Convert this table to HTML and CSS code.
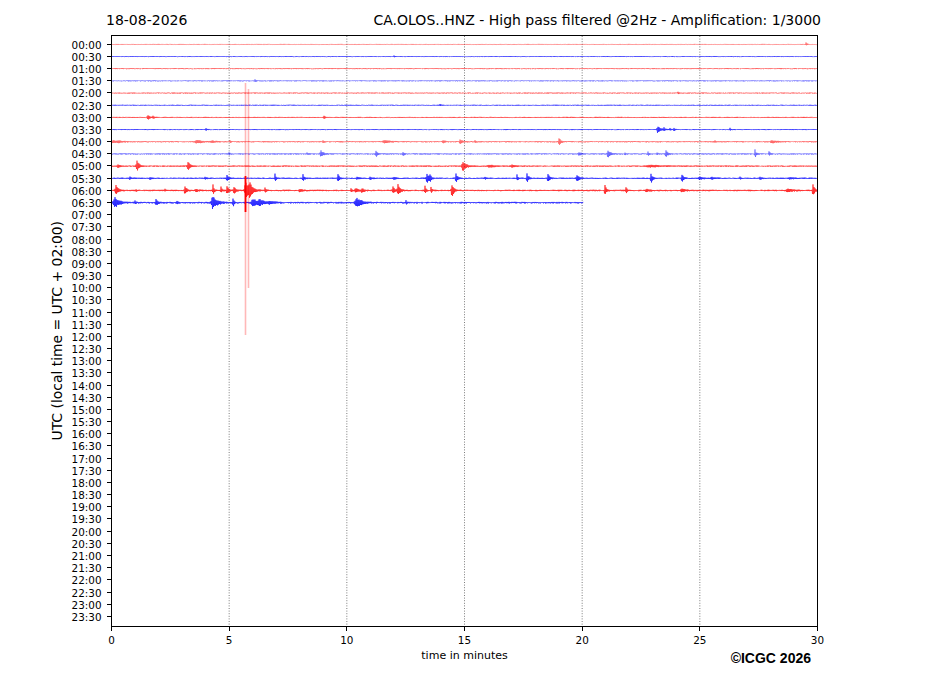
FILE: index.html
```html
<!DOCTYPE html>
<html lang="en">
<head>
<meta charset="utf-8">
<title>CA.OLOS..HNZ helicorder</title>
<link rel="stylesheet" href="styles.css">
</head>
<body>
<div class="figure">
  <header class="titles">
    <span class="date">18-08-2026</span>
    <span class="station">CA.OLOS..HNZ - High pass filtered @2Hz - Amplification: 1/3000</span>
  </header>
  <div class="chart">
    <div class="ylabel"><span>UTC (local time = UTC + 02:00)</span></div>
    <ol class="yticks">
      <li>00:00</li><li>00:30</li><li>01:00</li><li>01:30</li><li>02:00</li><li>02:30</li>
      <li>03:00</li><li>03:30</li><li>04:00</li><li>04:30</li><li>05:00</li><li>05:30</li>
      <li>06:00</li><li>06:30</li><li>07:00</li><li>07:30</li><li>08:00</li><li>08:30</li>
      <li>09:00</li><li>09:30</li><li>10:00</li><li>10:30</li><li>11:00</li><li>11:30</li>
      <li>12:00</li><li>12:30</li><li>13:00</li><li>13:30</li><li>14:00</li><li>14:30</li>
      <li>15:00</li><li>15:30</li><li>16:00</li><li>16:30</li><li>17:00</li><li>17:30</li>
      <li>18:00</li><li>18:30</li><li>19:00</li><li>19:30</li><li>20:00</li><li>20:30</li>
      <li>21:00</li><li>21:30</li><li>22:00</li><li>22:30</li><li>23:00</li><li>23:30</li>
    </ol>
    <svg class="plot" width="707" height="592" viewBox="0 0 707 592" xmlns="http://www.w3.org/2000/svg">
      <g class="grid">
        <line x1="118.17" y1="1" x2="118.17" y2="591"/>
        <line x1="235.83" y1="1" x2="235.83" y2="591"/>
        <line x1="353.5" y1="1" x2="353.5" y2="591"/>
        <line x1="471.17" y1="1" x2="471.17" y2="591"/>
        <line x1="588.83" y1="1" x2="588.83" y2="591"/>
      </g>
      <g id="traces"></g>
      <g class="spike">
        <line x1="134.5" y1="48" x2="134.5" y2="300"/>
        <line x1="137.5" y1="54" x2="137.5" y2="253"/>
      </g>
      <rect class="spike-core" x="133.6" y="141" width="1.8" height="36"/>
      <rect class="frame" x="0.5" y="0.5" width="706" height="591"/>
    </svg>
    <div class="xticks">
      <span>0</span><span>5</span><span>10</span><span>15</span><span>20</span><span>25</span><span>30</span>
    </div>
    <div class="xfoot">
      <span class="xlabel">time in minutes</span>
      <span class="copyright">©ICGC 2026</span>
    </div>
  </div>
</div>
<script src="script.js"></script>
</body>
</html>
```
FILE: styles.css
```css
* { box-sizing: border-box; }

body {
  margin: 0;
  background: #fff;
  color: #000;
  font-family: "DejaVu Sans", sans-serif;
}

.figure {
  width: 927px;
  height: 696px;
  overflow: hidden;
}

.titles {
  display: flex;
  justify-content: space-between;
  margin-left: 106px;
  width: 715px;
  height: 35px;
  padding-top: 12px;
  font-size: 14px;
  line-height: 16px;
  white-space: nowrap;
}

.chart {
  display: grid;
  grid-template-columns: 64px 47px 707px;
  grid-template-rows: 592px auto auto;
}

.ylabel {
  grid-column: 1;
  grid-row: 1;
  display: flex;
  justify-content: flex-end;
  align-items: center;
}

.ylabel span {
  writing-mode: vertical-rl;
  transform: rotate(180deg);
  font-size: 13.9px;
  line-height: 15px;
  margin-right: -0.5px;
  white-space: nowrap;
}

.yticks {
  grid-column: 2;
  grid-row: 1;
  list-style: none;
  margin: 0;
  padding: 3.7px 0 0;
  font-size: 10.4px;
}

.yticks li {
  height: 12.18px;
  display: flex;
  align-items: center;
  justify-content: flex-end;
  line-height: 12px;
  white-space: nowrap;
}

.yticks li::after {
  content: "";
  width: 4px;
  height: 1px;
  margin-top: -1px;
  background: #000;
  margin-left: 5.5px;
}

.plot {
  grid-column: 3;
  grid-row: 1;
  display: block;
}

.grid line {
  stroke: #444;
  stroke-width: 0.7;
  stroke-dasharray: 1 1.6;
}

.spike line {
  stroke: #ff0000;
  stroke-opacity: 0.28;
  stroke-width: 1.6;
}

.spike-core {
  fill: #ff0000;
  stroke: none;
}

.frame {
  fill: none;
  stroke: #000;
  stroke-width: 1;
}

.xticks {
  grid-column: 3;
  grid-row: 2;
  display: flex;
  justify-content: space-between;
  font-size: 10.4px;
  line-height: 12px;
}

.xticks span {
  width: 1px;
  display: flex;
  flex-direction: column;
  align-items: center;
  white-space: nowrap;
}

.xticks span::before {
  content: "";
  width: 1px;
  height: 4px;
  background: #000;
  margin-bottom: 3.4px;
}

.xfoot {
  grid-column: 3;
  grid-row: 3;
  display: grid;
  grid-template-columns: 1fr auto 1fr;
  align-items: start;
}

.xlabel {
  grid-column: 2;
  font-size: 11px;
  margin-top: 3px;
  white-space: nowrap;
}

.copyright {
  grid-column: 3;
  justify-self: end;
  margin-right: 7px;
  margin-top: 4px;
  font-family: "Liberation Sans", Arial, sans-serif;
  font-weight: bold;
  font-size: 14px;
  white-space: nowrap;
}
```
FILE: script.js
```js
(function () {
  var NS = "http://www.w3.org/2000/svg";
  var g = document.getElementById("traces");
  var seed = 12345;
  function rnd() {
    seed |= 0; seed = (seed + 0x6D2B79F5) | 0;
    var t = Math.imul(seed ^ (seed >>> 15), 1 | seed);
    t = (t + Math.imul(t ^ (t >>> 7), 61 | t)) ^ t;
    return ((t ^ (t >>> 14)) >>> 0) / 4294967296;
  }
  var LEFT = 111;
  // [noise, opacity, endX(abs), events [x(abs), amp, width]]
  var rows = [
    [0.3, 0.55, 817, [[806, 1.5, 1]]],
    [0.35, 0.85, 817, [[394, 0.8, 1]]],
    [0.35, 0.7, 817, []],
    [0.45, 0.5, 817, [[255, 1, 1]]],
    [0.35, 0.75, 817, [[678, 0.8, 1]]],
    [0.35, 0.85, 817, [[440, 0.8, 1]]],
    [0.4, 0.8, 817, [[148, 2, 2], [153, 1, 1.5], [324, 1.2, 1.5]]],
    [0.4, 0.85, 817, [[206, 1, 1], [658, 3, 2.5], [664, 1.5, 1], [670, 1, 1], [674, 1, 1.5], [730, 1.2, 1]]],
    [0.5, 0.55, 817, [[113, 1, 4], [119, 0.8, 4], [197, 1.2, 5], [212, 0.8, 3], [230, 1, 1], [323, 1, 1], [385, 1, 5], [443, 1.5, 1.5], [460, 1.8, 2], [475, 1, 1], [559, 3.5, 1.5], [715, 0.8, 1], [772, 1.2, 4]]],
    [0.5, 0.55, 817, [[229, 1.2, 1], [307, 1, 1], [321, 2.5, 2.5], [376, 3, 1.2], [403, 2, 1.2], [579, 1.5, 2], [608, 3.5, 2], [625, 1, 1], [648, 2, 1], [657, 1, 1], [666, 3.5, 1.5], [755, 3.5, 1], [769, 2, 1]]],
    [0.5, 0.8, 817, [[118, 1.2, 2], [137, 5, 2], [188, 3.5, 2], [463, 4, 3], [490, 0.8, 6], [512, 1, 4], [650, 0.7, 12]]],
    [0.5, 0.9, 817, [[130, 1, 2], [150, 0.8, 2], [205, 0.8, 2], [227, 3.5, 1.5], [275, 3.5, 1], [303, 3.5, 1.2], [338, 3.5, 1.5], [357, 1, 2], [370, 1, 2], [394, 1, 2], [427, 5, 2], [430, 3, 1], [456, 4, 1.5], [485, 1, 1], [517, 3, 1], [527, 4, 1.5], [548, 4, 1.5], [577, 3, 2], [651, 4, 1.5], [682, 3, 1.5], [700, 1, 4], [712, 1, 3], [740, 1, 1], [760, 1, 2], [790, 0.8, 4]]],
    [0.55, 0.9, 817, [[116, 4, 2], [136, 1, 1], [165, 1, 1], [185, 3, 2], [196, 1, 3], [213, 4.5, 1], [221, 3, 1], [227, 4, 1.5], [234, 3.5, 1.5], [246, 8, 3], [250, 4, 3], [265, 2, 1], [300, 1, 3], [351, 1.5, 1], [356, 1.5, 3], [362, 1.5, 2], [393, 3, 1.5], [398, 4.5, 2], [425, 3.5, 1], [431, 2.5, 1], [452, 5, 2], [605, 4, 1.5], [626, 3, 1], [647, 1, 4], [682, 1.5, 3], [788, 1.2, 5], [813, 5, 1.5]]],
    [0.6, 0.9, 583, [[115, 4, 4], [135, 1.5, 1], [156, 3, 1.5], [177, 1.5, 1], [213, 5.5, 4], [233, 4, 1], [253, 3.5, 4], [260, 2, 4], [270, 1, 5], [357, 3.5, 5], [406, 1.5, 1]]]
  ];
  rows.forEach(function (r, i) {
    var y0 = 9.3 + 12.18 * i;
    var noise = r[0], op = r[1], end = r[2] - LEFT, ev = r[3];
    var d = [];
    var k = 0;
    for (var x = 1; x <= end; x += 0.5, k++) {
      var ax = x + LEFT;
      var amp = noise * (0.4 + rnd());
      for (var j = 0; j < ev.length; j++) {
        var dx = ax - ev[j][0];
        var w = ev[j][2];
        var env = 0;
        if (dx >= 0 && dx < w * 6) {
          env = Math.exp(-dx / w);
        } else if (dx < 0 && dx > -w) {
          env = Math.exp(-(dx * dx) / (0.16 * w * w));
        }
        if (env > 0) {
          amp += 1.3 * ev[j][1] * env * (0.55 + 0.45 * rnd());
        }
      }
      var v = (k % 2 ? 1 : -1) * amp;
      d.push((k ? "L" : "M") + x.toFixed(1) + " " + (y0 + v).toFixed(2));
    }
    var p = document.createElementNS(NS, "path");
    p.setAttribute("d", d.join(""));
    p.setAttribute("fill", "none");
    p.setAttribute("stroke", i % 2 ? "#0000ff" : "#ff0000");
    p.setAttribute("stroke-width", "0.7");
    p.setAttribute("stroke-opacity", op);
    g.appendChild(p);
  });
})();
```
